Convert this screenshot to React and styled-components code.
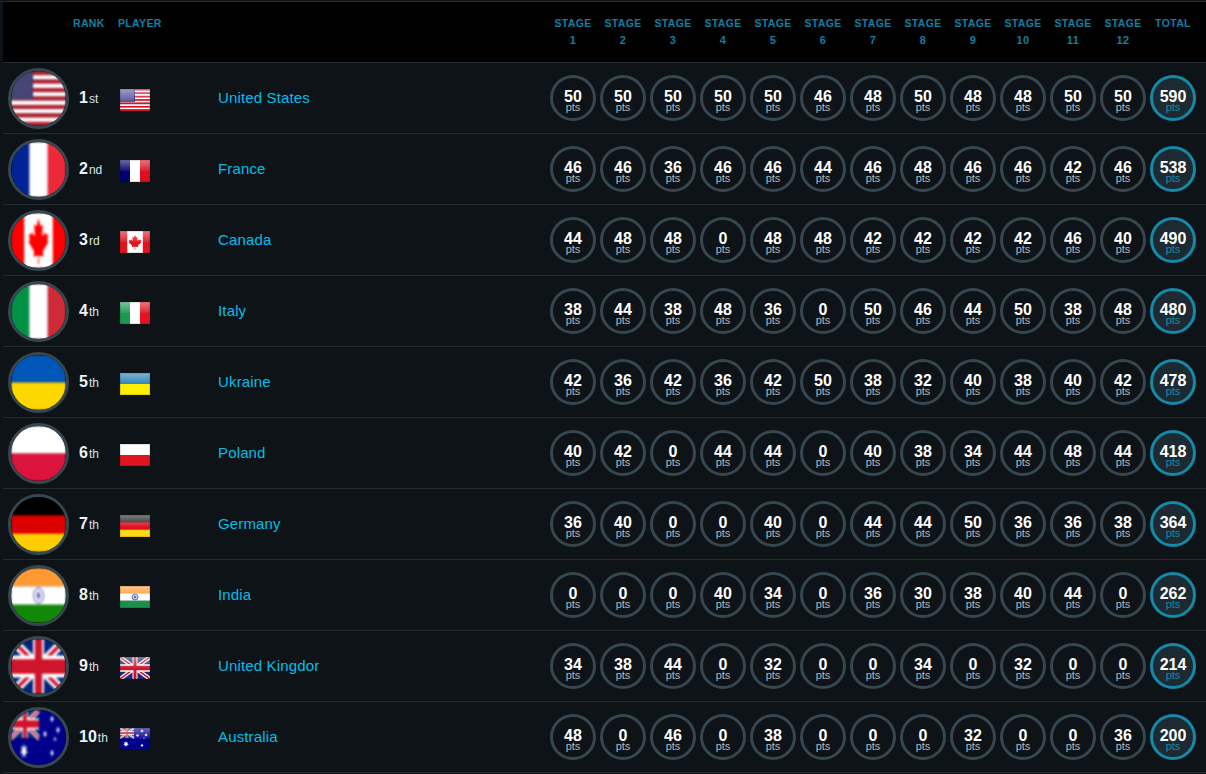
import React from 'react';
import styled, { createGlobalStyle } from 'styled-components';

const GRID = '70px 45px 100px 330px repeat(13, 50px)';

const players = [
  { flag: 'us', rank: 1, suffix: 'st', name: 'United States', scores: [50, 50, 50, 50, 50, 46, 48, 50, 48, 48, 50, 50], total: 590 },
  { flag: 'fr', rank: 2, suffix: 'nd', name: 'France', scores: [46, 46, 36, 46, 46, 44, 46, 48, 46, 46, 42, 46], total: 538 },
  { flag: 'ca', rank: 3, suffix: 'rd', name: 'Canada', scores: [44, 48, 48, 0, 48, 48, 42, 42, 42, 42, 46, 40], total: 490 },
  { flag: 'it', rank: 4, suffix: 'th', name: 'Italy', scores: [38, 44, 38, 48, 36, 0, 50, 46, 44, 50, 38, 48], total: 480 },
  { flag: 'ua', rank: 5, suffix: 'th', name: 'Ukraine', scores: [42, 36, 42, 36, 42, 50, 38, 32, 40, 38, 40, 42], total: 478 },
  { flag: 'pl', rank: 6, suffix: 'th', name: 'Poland', scores: [40, 42, 0, 44, 44, 0, 40, 38, 34, 44, 48, 44], total: 418 },
  { flag: 'de', rank: 7, suffix: 'th', name: 'Germany', scores: [36, 40, 0, 0, 40, 0, 44, 44, 50, 36, 36, 38], total: 364 },
  { flag: 'in', rank: 8, suffix: 'th', name: 'India', scores: [0, 0, 0, 40, 34, 0, 36, 30, 38, 40, 44, 0], total: 262 },
  { flag: 'gb', rank: 9, suffix: 'th', name: 'United Kingdor', scores: [34, 38, 44, 0, 32, 0, 0, 34, 0, 32, 0, 0], total: 214 },
  { flag: 'au', rank: 10, suffix: 'th', name: 'Australia', scores: [48, 0, 46, 0, 38, 0, 0, 0, 32, 0, 0, 36], total: 200 },
];

const stages = [1, 2, 3, 4, 5, 6, 7, 8, 9, 10, 11, 12];

const GlobalStyle = createGlobalStyle`
  html, body {
    margin: 0;
    padding: 0;
    background: #0e1318;
    overflow: hidden;
  }
  body {
    font-family: "Liberation Sans", Arial, sans-serif;
  }
`;

const Board = styled.div`
  width: 1206px;
  height: 774px;
  padding-top: 1px;
  box-sizing: border-box;
`;

const TopLine = styled.div`
  height: 1px;
  background: #232c33;
`;

const HeaderRow = styled.div`
  display: grid;
  grid-template-columns: ${GRID};
  height: 60px;
  box-sizing: border-box;
  margin-left: 3px;
  padding-top: 13px;
  background: #000;
`;

const HeaderLine = styled.div`
  height: 1px;
  margin-left: 3px;
  background: #232c33;
`;

const HeadCell = styled.div`
  grid-column: ${({ $col }) => $col || 'auto'};
  color: #0f7fa3;
  font-size: 10.5px;
  font-weight: 700;
  letter-spacing: 0.35px;
  line-height: 17px;
  text-align: ${({ $center }) => ($center ? 'center' : 'left')};
`;

const StageNumber = styled.span`
  display: block;
  font-size: 11px;
`;

const Row = styled.div`
  display: grid;
  grid-template-columns: ${GRID};
  align-items: center;
  height: 70px;
  margin-left: 3px;
  border-bottom: 1px solid #232c33;
`;

const Avatar = styled.div`
  width: 61px;
  height: 61px;
  margin-left: 5px;
  box-sizing: border-box;
  border: 3px solid #37474f;
  border-radius: 50%;
  overflow: hidden;
  background: #000;
`;

const AvatarArt = styled.svg`
  display: block;
  width: 55px;
  height: 55px;
  filter: blur(0.8px);
`;

const Rank = styled.div`
  color: #eef2f5;
  font-size: 16px;
  font-weight: 700;
  padding-left: 6px;
  white-space: nowrap;
`;

const Suffix = styled.span`
  color: #dbe3e8;
  font-size: 12px;
  font-weight: 400;
  margin-left: 1px;
`;

const SmallFlag = styled.svg`
  display: block;
  width: 30px;
  height: 22px;
  margin: 4px 0 0 2px;
`;

const Name = styled.div`
  color: #00bfe8;
  font-size: 15px;
  letter-spacing: 0.15px;
  padding-bottom: 2px;
`;

const Score = styled.div`
  justify-self: center;
  width: 46px;
  height: 46px;
  box-sizing: border-box;
  padding-top: 6px;
  border: 3px solid ${({ $total }) => ($total ? '#128aa8' : '#37474f')};
  border-radius: 50%;
  background: ${({ $total }) => ($total ? '#1e2a32' : 'transparent')};
  display: flex;
  flex-direction: column;
  align-items: center;
  justify-content: center;
`;

const Points = styled.span`
  color: #fff;
  font-size: 16px;
  font-weight: 700;
  line-height: 11px;
`;

const Unit = styled.span`
  color: ${({ $total }) => ($total ? '#128aa8' : '#b0b8bd')};
  font-size: 11px;
  line-height: 10px;
`;

const leafPath =
  'M0 -10 L1.8 -6.6 C2.2 -6 2.8 -6 3.4 -6.4 L4.8 -7.1 L3.8 -2.4 C3.6 -1.5 4.4 -1.1 5 -1.8 L6.8 -3.7 L7.3 -2.4 C7.5 -2 7.9 -2 8.4 -2.1 L10.2 -2.5 L9.5 -0.1 C9.3 0.5 9.4 0.8 9.8 1 L10.5 1.4 L5.2 5.5 C4.7 5.9 4.6 6.3 4.8 6.9 L5.3 8.4 L0.4 7.8 L0.5 12 L-0.5 12 L-0.4 7.8 L-5.3 8.4 L-4.8 6.9 C-4.6 6.3 -4.7 5.9 -5.2 5.5 L-10.5 1.4 L-9.8 1 C-9.4 0.8 -9.3 0.5 -9.5 -0.1 L-10.2 -2.5 L-8.4 -2.1 C-7.9 -2 -7.5 -2 -7.3 -2.4 L-6.8 -3.7 L-5 -1.8 C-4.4 -1.1 -3.6 -1.5 -3.8 -2.4 L-4.8 -7.1 L-3.4 -6.4 C-2.8 -6 -2.2 -6 -1.8 -6.6 Z';

// seven point star, stretched with ry for the squashed round flags
const Star = ({ x, y, r, ry }) => {
  const points = [];
  for (let i = 0; i < 14; i++) {
    const k = i % 2 ? 0.45 : 1;
    const angle = (Math.PI * i) / 7 - Math.PI / 2;
    points.push(`${x + r * k * Math.cos(angle)},${y + (ry || r) * k * Math.sin(angle)}`);
  }
  return <polygon points={points.join(' ')} fill="#fff" />;
};

// drawn on a 60x30 field, then stretched to whatever box it has to fill
const Union = ({ w, h, wide }) => (
  <g transform={`scale(${w / 60} ${h / 30})`}>
    <rect width="60" height="30" fill={wide ? '#00247d' : '#1c2a78'} />
    <path d="M0 0 L60 30 M60 0 L0 30" stroke="#fff" strokeWidth="6" />
    <path d="M0 0 L60 30 M60 0 L0 30" stroke="#cf142b" strokeWidth="2.4" />
    <path d="M30 0 V30 M0 15 H60" stroke="#fff" strokeWidth={wide ? 12 : 10} />
    <path d="M30 0 V30 M0 15 H60" stroke="#cf142b" strokeWidth={wide ? 8 : 6} />
  </g>
);

const Stripes = ({ w, h, dir, colors, sizes }) => {
  let at = 0;
  return colors.map((color, i) => {
    const size = sizes ? sizes[i] : 1 / colors.length;
    const start = at;
    at += size;
    return dir === 'v' ? (
      <rect key={i} x={start * w} y={0} width={size * w + 0.2} height={h} fill={color} />
    ) : (
      <rect key={i} x={0} y={start * h} width={w} height={size * h + 0.2} fill={color} />
    );
  });
};

const UsFlag = ({ w, h, round }) => {
  const stripes = [];
  for (let i = 0; i < 13; i++) stripes.push(i % 2 ? '#fff' : round ? '#b22234' : '#e0112b');
  const cw = round ? w * 0.4 : w * 0.5;
  const ch = round ? h * 0.52 : h * 0.58;
  const step = round ? 3 : 2;
  const dots = [];
  for (let y = 1; y < ch; y += step) {
    for (let x = 1; x < cw; x += step) {
      dots.push(<rect key={`${x}-${y}`} x={x - 0.5} y={y - 0.5} width="1" height="1" fill="#fff" opacity={round ? 0.45 : 0.9} />);
    }
  }
  return (
    <g>
      <Stripes w={w} h={h} colors={stripes} />
      <rect width={cw} height={ch} fill={round ? '#3c3b6e' : '#2b2a80'} />
      {dots}
    </g>
  );
};

const IndiaFlag = ({ w, h, round }) => {
  const rx = round ? 5 : 3;
  const ry = round ? 8 : 3;
  const blue = round ? '#5a5ab4' : '#4a62b8';
  const spokes = [];
  for (let i = 0; i < 12; i++) {
    const a = (Math.PI * i) / 6;
    spokes.push(
      <line key={i} x1={w / 2} y1={h / 2} x2={w / 2 + rx * Math.cos(a)} y2={h / 2 + ry * Math.sin(a)} stroke={blue} strokeWidth="0.4" />
    );
  }
  return (
    <g>
      <Stripes w={w} h={h} colors={['#ff9933', '#fff', round ? '#128807' : '#1a8f4a']} />
      <ellipse cx={w / 2} cy={h / 2} rx={rx} ry={ry} fill="#fff" stroke={blue} strokeWidth="0.9" />
      {spokes}
      <ellipse cx={w / 2} cy={h / 2} rx={rx * 0.3} ry={ry * 0.3} fill={blue} />
    </g>
  );
};

const Flag = ({ code, w, h, round }) => {
  switch (code) {
    case 'us':
      return <UsFlag w={w} h={h} round={round} />;
    case 'fr':
      return <Stripes w={w} h={h} dir="v" colors={round ? ['#002395', '#fff', '#ed2939'] : ['#00006e', '#fff', '#e00d25']} />;
    case 'it':
      return <Stripes w={w} h={h} dir="v" colors={round ? ['#009246', '#fff', '#ce2b37'] : ['#1a9a50', '#fff', '#e3141f']} />;
    case 'ua':
      return <Stripes w={w} h={h} colors={round ? ['#0057b7', '#ffd700'] : ['#1f7fb5', '#ffee00']} />;
    case 'pl':
      return <Stripes w={w} h={h} colors={round ? ['#fff', '#dc143c'] : ['#fff', '#e0141f']} />;
    case 'de':
      return <Stripes w={w} h={h} colors={round ? ['#000', '#dd0000', '#ffce00'] : ['#222', '#e01020', '#ffd815']} />;
    case 'ca':
      return (
        <g>
          <Stripes w={w} h={h} dir="v" colors={round ? ['#ff0000', '#fff', '#ff0000'] : ['#e3141f', '#fff', '#e3141f']} sizes={[0.24, 0.52, 0.24]} />
          <path
            d={leafPath}
            fill={round ? '#ff0000' : '#e3141f'}
            transform={round ? `translate(27.5 26) scale(0.95 2.1)` : `translate(15 10.5) scale(0.6 0.66)`}
          />
        </g>
      );
    case 'in':
      return <IndiaFlag w={w} h={h} round={round} />;
    case 'gb':
      return <Union w={w} h={h} wide={round} />;
    case 'au':
      return round ? (
        <g>
          <rect width={w} height={h} fill="#00008b" />
          <Union w={28} h={28} wide />
          <Star x={13} y={41} r={4} ry={8} />
          <Star x={41} y={9} r={2} ry={4} />
          <Star x={47} y={20} r={2} ry={4} />
          <Star x={34} y={24} r={2} ry={4} />
          <Star x={44} y={29} r={1.4} ry={2.6} />
          <Star x={41} y={43} r={2} ry={4} />
        </g>
      ) : (
        <g>
          <rect width={w} height={h} fill="#00008b" />
          <Union w={14} h={10} />
          <Star x={6} y={16} r={3} />
          <Star x={22} y={17.5} r={1.7} />
          <Star x={22} y={3} r={1.7} />
          <Star x={17.5} y={7.5} r={1.7} />
          <Star x={26} y={7} r={1.7} />
          <Star x={24} y={10} r={0.9} />
        </g>
      );
    default:
      return null;
  }
};

const RoundFlag = ({ code }) => (
  <AvatarArt viewBox="0 0 55 55">
    <Flag code={code} w={55} h={55} round />
  </AvatarArt>
);

const GlossyFlag = ({ code }) => (
  <SmallFlag viewBox="0 0 30 22">
    <defs>
      <linearGradient id={`gloss-${code}`} x1="0" y1="0" x2="0" y2="1">
        <stop offset="0" stopColor="#fff" stopOpacity="0.42" />
        <stop offset="1" stopColor="#fff" stopOpacity="0.06" />
      </linearGradient>
    </defs>
    <Flag code={code} w={30} h={22} />
    <rect width="30" height="11" fill={`url(#gloss-${code})`} />
    <rect x="0.5" y="0.5" width="29" height="21" fill="none" stroke="#000" strokeOpacity="0.12" />
  </SmallFlag>
);

const App = () => (
  <>
    <GlobalStyle />
    <Board>
      <TopLine />
      <HeaderRow>
        <HeadCell $col="2">RANK</HeadCell>
        <HeadCell>PLAYER</HeadCell>
        {stages.map((stage, i) => (
          <HeadCell key={stage} $col={5 + i} $center>
            STAGE
            <StageNumber>{stage}</StageNumber>
          </HeadCell>
        ))}
        <HeadCell $col="17" $center>TOTAL</HeadCell>
      </HeaderRow>
      <HeaderLine />
      {players.map((player) => (
        <Row key={player.flag}>
          <Avatar>
            <RoundFlag code={player.flag} />
          </Avatar>
          <Rank>
            {player.rank}
            <Suffix>{player.suffix}</Suffix>
          </Rank>
          <GlossyFlag code={player.flag} />
          <Name>{player.name}</Name>
          {player.scores.map((score, i) => (
            <Score key={i}>
              <Points>{score}</Points>
              <Unit>pts</Unit>
            </Score>
          ))}
          <Score $total>
            <Points>{player.total}</Points>
            <Unit $total>pts</Unit>
          </Score>
        </Row>
      ))}
    </Board>
  </>
);

export default App;
